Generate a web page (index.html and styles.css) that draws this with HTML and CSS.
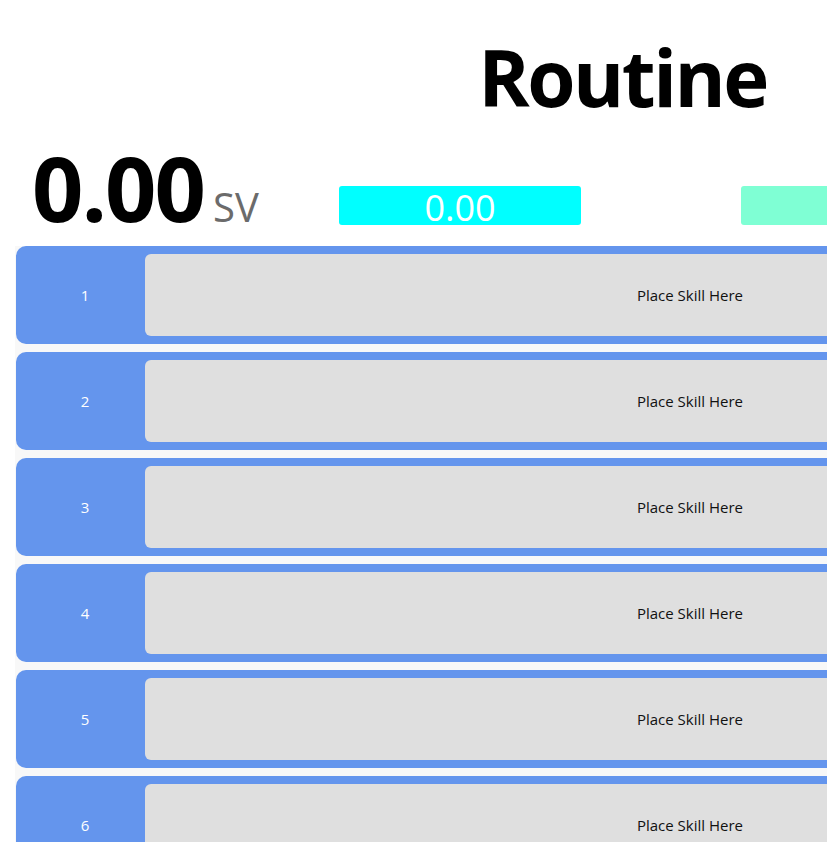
FILE: index.html
```html
<!DOCTYPE html>
<html lang="en">
<head>
<meta charset="utf-8">
<title>Routine</title>
<link rel="stylesheet" href="styles.css">
</head>
<body>
<div class="page">
  <h1 class="title">Routine</h1>
  <div class="stats">
    <div class="score"><span class="score-value">0.00</span><span class="score-unit">SV</span></div>
    <div class="meter meter-cyan">0.00</div>
    <div class="meter meter-aqua"></div>
  </div>
  <div class="routine">
    <div class="row"><div class="num">1</div><div class="slot">Place Skill Here</div></div>
    <div class="row"><div class="num">2</div><div class="slot">Place Skill Here</div></div>
    <div class="row"><div class="num">3</div><div class="slot">Place Skill Here</div></div>
    <div class="row"><div class="num">4</div><div class="slot">Place Skill Here</div></div>
    <div class="row"><div class="num">5</div><div class="slot">Place Skill Here</div></div>
    <div class="row"><div class="num">6</div><div class="slot">Place Skill Here</div></div>
    <div class="row"><div class="num">7</div><div class="slot">Place Skill Here</div></div>
    <div class="row"><div class="num">8</div><div class="slot">Place Skill Here</div></div>
  </div>
</div>
</body>
</html>
```

FILE: styles.css
```css
html, body {
  margin: 0;
  padding: 0;
  background: #ffffff;
}

body {
  font-family: "Open Sans", "Noto Sans", "Liberation Sans", sans-serif;
  color: #000;
}

.page {
  width: 1245px;
  padding: 0 0 0 15px;
  box-sizing: border-box;
}

.title {
  width: 1215px;
  margin: 0;
  padding-top: 37px;
  font-size: 78px;
  line-height: 80px;
  font-weight: 700;
  text-align: center;
  letter-spacing: -2.5px;
}

.stats {
  display: flex;
  align-items: flex-start;
  margin-top: 25px;
  height: 104px;
  padding-left: 17px;
}

.score {
  width: 307px;
  display: flex;
  align-items: baseline;
  flex: none;
}

.score-value {
  font-size: 90px;
  line-height: 90px;
  font-weight: 700;
  letter-spacing: -2px;
}

.score-unit {
  font-size: 40px;
  color: #6b6b6b;
  margin-left: 9px;
}

.meter {
  flex: none;
  width: 242px;
  height: 39px;
  margin-top: 44px;
  border-radius: 3px;
  color: #fff;
  font-size: 36px;
  line-height: 44px;
  text-align: center;
  font-weight: 400;
}

.meter-cyan {
  background: #00ffff;
}

.meter-aqua {
  background: #7fffd4;
  margin-left: 160px;
}

.routine {
  width: 1228px;
  padding-left: 1px;
  background: #f8f8f8;
  box-sizing: border-box;
}

.row {
  display: flex;
  height: 98px;
  box-sizing: border-box;
  padding: 8px 8px 8px 0;
  margin-bottom: 8px;
  background: #6495ed;
  border-radius: 10px;
}

.num {
  flex: none;
  width: 129px;
  padding-left: 9px;
  box-sizing: border-box;
  display: flex;
  align-items: center;
  justify-content: center;
  color: #fff;
  font-size: 15px;
}

.slot {
  flex: 1;
  display: flex;
  align-items: center;
  justify-content: center;
  background: #dfdfdf;
  border-radius: 6px;
  font-size: 15px;
  color: #111;
}
```
